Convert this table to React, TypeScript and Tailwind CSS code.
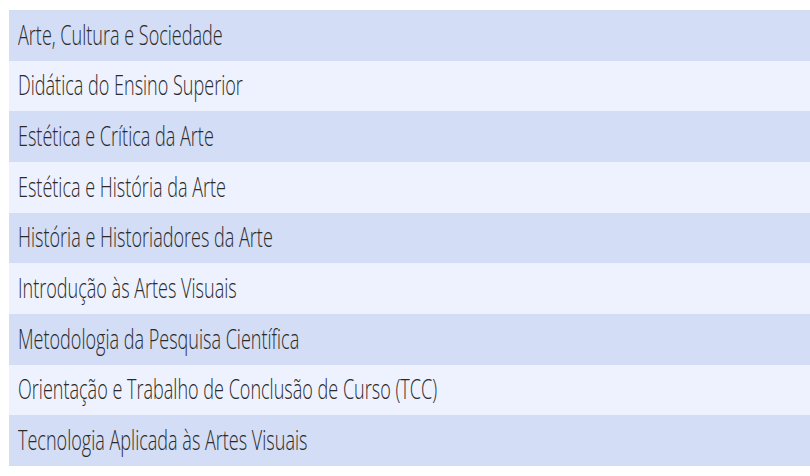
const disciplinas = [
  "Arte, Cultura e Sociedade",
  "Didática do Ensino Superior",
  "Estética e Crítica da Arte",
  "Estética e História da Arte",
  "História e Historiadores da Arte",
  "Introdução às Artes Visuais",
  "Metodologia da Pesquisa Científica",
  "Orientação e Trabalho de Conclusão de Curso (TCC)",
  "Tecnologia Aplicada às Artes Visuais",
];

export default function App() {
  return (
    <div className="h-[476px] w-[810px] overflow-hidden bg-white pl-[9px] pt-[10px]">
      <ul className="w-[801px]">
        {disciplinas.map((d, i) => (
          <li
            key={d}
            className={`flex h-[50.67px] items-center pb-[2px] pl-[9px] ${
              i % 2 === 0 ? "bg-[#d3ddf5]" : "bg-[#eef2fe]"
            }`}
          >
            <span className="origin-left scale-x-[0.668] whitespace-nowrap font-['Open_Sans',sans-serif] text-[27px] font-light leading-none text-[#2a2a2a]">
              {d}
            </span>
          </li>
        ))}
      </ul>
    </div>
  );
}
